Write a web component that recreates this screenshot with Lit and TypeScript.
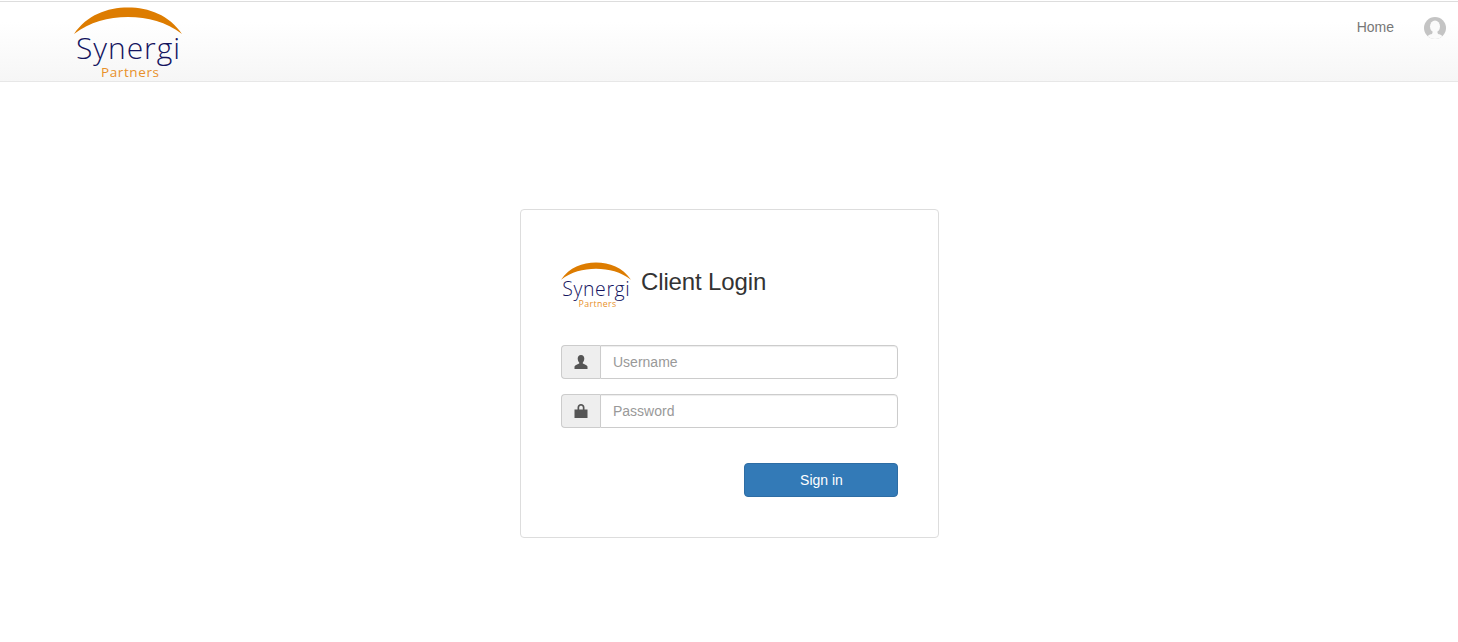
import { LitElement, html, css, svg } from "lit";
import { customElement } from "lit/decorators.js";

const logo = (cls: string) => html`<svg class=${cls} viewBox="0 0 108 72" aria-label="Synergi Partners">
  ${svg`<path d="M0 27C13 8 33 .5 54 .5C75 .5 95 8 108 27C92 15 74 10 54 10C34 10 16 15 0 27Z" fill="#dd7c00"/>
  <text x="2" y="52" textLength="104" lengthAdjust="spacing" font-family="'Open Sans', Lato, sans-serif" font-weight="300" font-size="30" fill="#14145f">Synergi</text>
  <text x="27" y="69.500" textLength="58" lengthAdjust="spacing" font-family="'Open Sans', Lato, sans-serif" font-weight="400" font-size="13.500" fill="#e8902a">Partners</text>`}
</svg>`;

@customElement("app-root")
export class AppRoot extends LitElement {
  static styles = css`
    :host { display: block; min-height: 642px; background: #fff; padding-top: 1px; font-family: "Liberation Sans", Arial, sans-serif; font-size: 14px; color: #333; }
    * { box-sizing: border-box; }
    .nav { height: 81px; border-top: 1px solid #ddd; border-bottom: 1px solid #e7e7e7; background: linear-gradient(to bottom, #fff 0%, #fff 25%, #f6f6f6 100%); display: flex; justify-content: space-between; padding: 5px 12px 0 74px; }
    .nav-logo { width: 108px; height: 72px; display: block; overflow: visible; }
    .nav-right { display: flex; align-items: flex-start; gap: 30px; padding-top: 10px; }
    .home { color: #777; line-height: 20px; }
    .avatar { width: 22px; height: 22px; display: block; }
    .card { width: 419px; height: 329px; margin: 127px auto 0; border: 1px solid #ddd; border-radius: 4px; padding: 52px 40px 0; }
    .title-row { display: flex; align-items: flex-start; gap: 10px; height: 83px; }
    .card-logo { width: 70px; height: 47px; display: block; overflow: visible; }
    h2 { margin: 0; font-size: 24px; font-weight: 400; line-height: 26px; color: #333; padding: 7px 0 0 .5px; letter-spacing: -0.13px; }
    .group { display: flex; height: 34px; margin-bottom: 15px; }
    .addon { width: 39px; background: #eee; border: 1px solid #ccc; border-right: 0; border-radius: 4px 0 0 4px; display: flex; align-items: center; justify-content: center; }
    .addon svg { width: 14px; height: 14px; display: block; fill: #555; }
    input { flex: 1; min-width: 0; border: 1px solid #ccc; border-radius: 0 4px 4px 0; padding: 6px 12px 6px 12.5px; font: 14px/20px "Liberation Sans", Arial, sans-serif; color: #555; box-shadow: inset 0 1px 1px rgba(0,0,0,.075); outline: none; background: #fff; }
    input::placeholder { color: #999; opacity: 1; }
    .actions { display: flex; justify-content: flex-end; padding-top: 20px; }
    button { width: 154px; height: 34px; background: #337ab7; border: 1px solid #2e6da4; border-radius: 4px; color: #fff; font: 14px/20px "Liberation Sans", Arial, sans-serif; padding: 0 0 0 2px; }
  `;

  render() {
    return html`
      <header class="nav">
        ${logo("nav-logo")}
        <div class="nav-right">
          <span class="home">Home</span>
          <svg class="avatar" viewBox="0 0 22 22"><defs><clipPath id="c"><circle cx="11" cy="11" r="11"/></clipPath></defs>
            <circle cx="11" cy="11" r="11" fill="#c4c4c4"/>
            <g clip-path="url(#c)" fill="#fafafa"><ellipse cx="11" cy="9.500" rx="5" ry="6"/><path d="M9 14h4l1 3c3 .5 5 1.500 6 5H2c1-3.500 3-4.500 6-5Z"/></g>
          </svg>
        </div>
      </header>
      <section class="card">
        <div class="title-row">${logo("card-logo")}<h2>Client Login</h2></div>
        <div class="group">
          <span class="addon"><svg viewBox="0 0 14 14"><path d="M7 0C4.900 0 3.700 1.500 3.700 3.600c0 1.500.6 3 1.500 4v1C4 9.400 1 10 .5 11.500V14h13v-2.500C13 10 10 9.400 8.800 8.600v-1c.9-1 1.500-2.500 1.500-4C10.300 1.500 9.100 0 7 0Z"/></svg></span>
          <input placeholder="Username" />
        </div>
        <div class="group">
          <span class="addon"><svg viewBox="0 0 14 14"><path d="M.5 5.500h3v-2C3.500 1.300 5 0 7 0s3.500 1.300 3.500 3.500v2h3V14H.5ZM5.200 5.500h3.600v-2C8.800 2.400 8 1.800 7 1.800S5.200 2.400 5.200 3.500Z"/></svg></span>
          <input type="password" placeholder="Password" />
        </div>
        <div class="actions"><button>Sign in</button></div>
      </section>
    `;
  }
}
